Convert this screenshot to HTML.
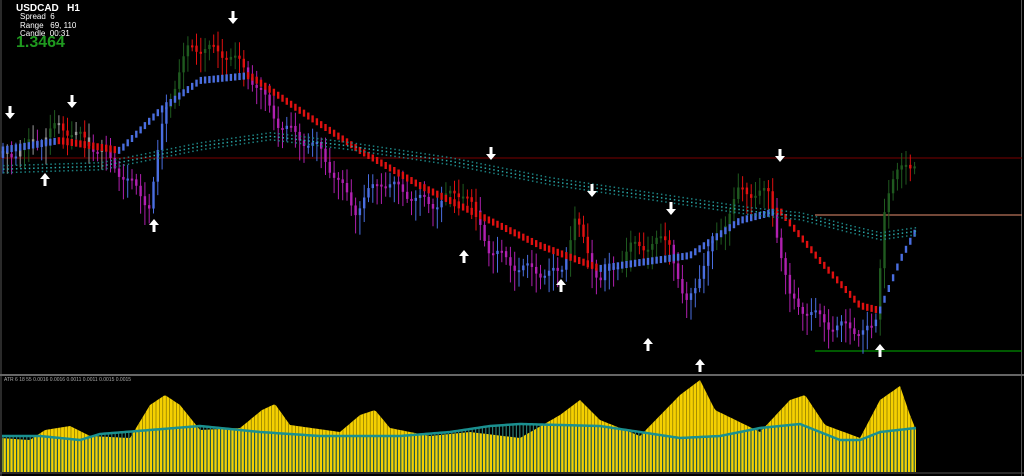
<!DOCTYPE html>
<html><head><meta charset="utf-8"><style>
html,body{margin:0;padding:0;background:#000;width:1024px;height:476px;overflow:hidden}
svg{position:absolute;left:0;top:0}
.t{position:absolute;font-family:"Liberation Sans",sans-serif;color:#fff}
</style></head><body>
<svg id="s" width="1024" height="476" xmlns="http://www.w3.org/2000/svg">
<rect x="0" y="0" width="1024" height="476" fill="#000"/>
<line x1="1" y1="0" x2="1" y2="476" stroke="#555" stroke-width="1"/>
<line x1="1021.5" y1="0" x2="1021.5" y2="476" stroke="#555"/>
<line x1="0" y1="375" x2="1024" y2="375" stroke="#666" stroke-width="2"/>
<line x1="0" y1="473" x2="1024" y2="473" stroke="#555"/>
<line x1="0" y1="158" x2="1022" y2="158" stroke="#7a0000"/>
<line x1="815" y1="215" x2="1022" y2="215" stroke="#e89070"/>
<line x1="815" y1="351" x2="1022" y2="351" stroke="#00b000"/>
<g id="g"></g>
</svg>
<div class="t" style="left:16px;top:3px;font-size:10px;font-weight:bold">USDCAD&nbsp;&nbsp; H1</div>
<div class="t" style="left:20px;top:13px;font-size:8px;line-height:8.5px">Spread&nbsp; 6<br>Range&nbsp;&nbsp; 69, 110<br>Candle&nbsp; 00:31</div>
<div class="t" style="left:16px;top:34px;font-size:16px;font-weight:bold;color:#1f9a1f">1.3464</div>
<div class="t" style="left:4px;top:377px;font-size:5px;color:#aaa">ATR 6 18 55 0.0016 0.0016 0.0011 0.0011 0.0015 0.0015</div>
<script>
var g=document.getElementById('g'),NS='http://www.w3.org/2000/svg';
function el(n,a){var e=document.createElementNS(NS,n);for(var k in a)e.setAttribute(k,a[k]);g.appendChild(e);return e}
function interp(p,x){for(var i=0;i<p.length-1;i++){if(x<=p[i+1][0]){var t=(x-p[i][0])/(p[i+1][0]-p[i][0]);return p[i][1]+(p[i+1][1]-p[i][1])*t}}return p[p.length-1][1]}
var P=[[0,158],[40,140],[60,125],[100,150],[150,205],[165,110],[190,45],[230,55],[250,75],[280,125],[320,150],[355,210],[380,180],[430,205],[465,190],[490,250],[520,268],[560,275],[575,220],[600,282],[630,248],[670,240],[685,310],[700,272],[740,190],[770,195],[790,300],[830,325],[875,332],[885,200],[905,160],[915,165]];
var M=[[0,150],[60,140],[120,150],[160,110],[200,80],[250,75],[300,110],[360,150],[420,185],[480,215],[540,245],[600,268],[640,262],[690,255],[740,220],[780,210],[820,260],[860,305],[880,310],[900,260],[915,232]];
var A=[[0,168],[100,165],[200,145],[270,135],[350,145],[450,160],[550,180],[650,195],[750,210],[800,215],[850,228],[880,235],[915,230]];
var prev=interp(P,0);
for(var x=3;x<=915;x+=4.3){
 var c=interp(P,x)+Math.sin(x*1.7)*6,o=prev;prev=c;
 var m=interp(M,x),md=interp(M,x+4)-m;
 var hi=Math.min(o,c)-4-Math.abs(Math.sin(x*0.9))*10,lo=Math.max(o,c)+4+Math.abs(Math.cos(x*1.3))*16;
 var col=(c<o)?(c<m?'#1f5a1f':'#4a6ee0'):(c>m?'#b020b0':'#e01010');
 if(x<110&&Math.sin(x)>0.6)col='#999';
 el('line',{x1:x,y1:hi,x2:x,y2:lo,stroke:col,'stroke-width':1});
 el('rect',{x:x-1.2,y:Math.min(o,c),width:2.4,height:Math.max(2,Math.abs(c-o)),fill:col});
 var mc=md<0?'#4a6ee0':'#e01010';
 el('rect',{x:x-1.2,y:m-3,width:2.4,height:7,fill:mc});
 var a=interp(A,x);
 for(var k=0;k<3;k++)el('rect',{x:x,y:a-3+k*3.5,width:1.5,height:1.5,fill:k==1?'#2aa8a8':'#1c8080'});
}
function arrow(x,y,down){var d=down?1:-1;
 el('path',{d:'M'+x+' '+(y+d*7)+'L'+(x-5)+' '+(y+d*1)+'L'+(x-1.5)+' '+(y+d*1)+'L'+(x-1.5)+' '+(y-d*6)+'L'+(x+1.5)+' '+(y-d*6)+'L'+(x+1.5)+' '+(y+d*1)+'L'+(x+5)+' '+(y+d*1)+'Z',fill:'#fff'});}
[[10,112],[72,101],[233,17],[491,153],[592,190],[671,208],[780,155]].forEach(function(p){arrow(p[0],p[1],true)});
[[45,180],[154,226],[464,257],[561,286],[648,345],[700,366],[880,351]].forEach(function(p){arrow(p[0],p[1],false)});
var Y=[[0,438],[30,440],[45,430],[70,426],[90,436],[130,438],[150,405],[165,395],[180,405],[200,430],[240,428],[262,410],[275,404],[290,425],[340,432],[360,415],[375,410],[390,428],[430,436],[470,432],[520,438],[560,415],[580,400],[600,420],[640,436],[680,395],[700,380],[715,410],[760,432],[790,400],[805,395],[825,425],[860,438],[880,400],[900,386],[910,415],[916,430]];
var T=[[0,436],[40,436],[80,440],[100,434],[150,430],[200,426],[260,432],[320,436],[400,436],[450,432],[490,426],[520,424],[560,425],[600,426],[640,432],[680,438],[720,436],[760,428],[800,424],[840,440],[860,440],[880,432],[916,428]];
var d='M2 472';for(var x=2;x<=916;x+=2)d+='L'+x+' '+interp(Y,x);d+='L916 472Z';
el('path',{d:d,fill:'#f5d000'});
for(var x=3;x<=916;x+=3.4){el('line',{x1:x,y1:interp(T,x),x2:x,y2:472,stroke:'#2a7a70','stroke-width':1.2});
 el('line',{x1:x,y1:interp(Y,x),x2:x,y2:472,stroke:'#1a1a00','stroke-width':0.6,'stroke-opacity':0.6});}
var d2='';for(var x=2;x<=916;x+=2)d2+=(x==2?'M':'L')+x+' '+interp(T,x);
el('path',{d:d2,fill:'none',stroke:'#1a9090','stroke-width':2.5});
</script>
</body></html>
